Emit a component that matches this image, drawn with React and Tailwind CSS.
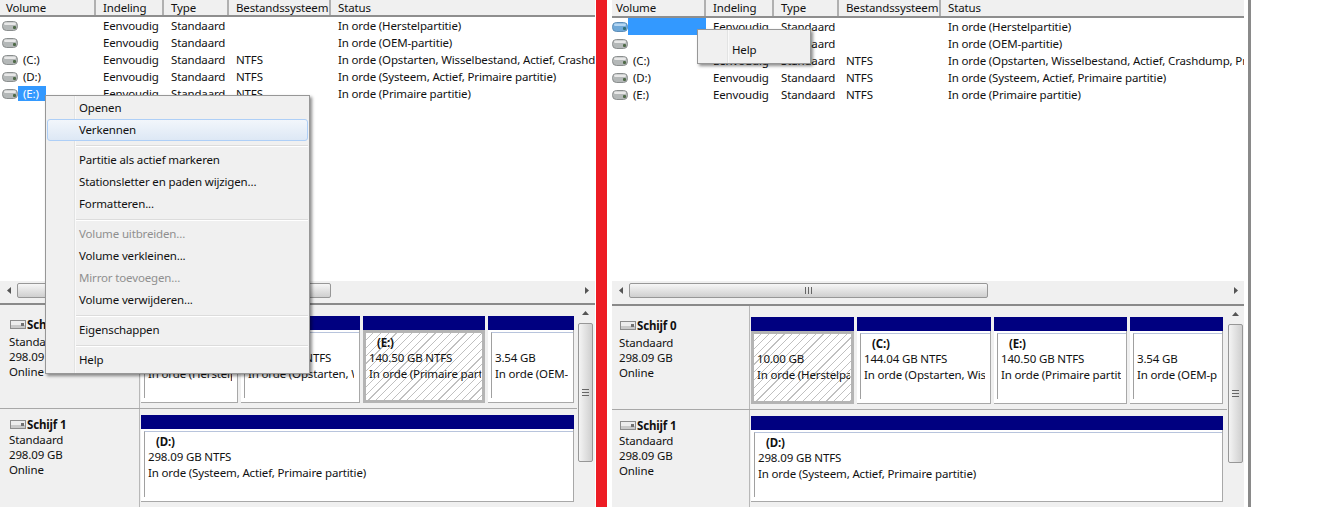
import React from "react";

const rows = [
  ["", "Eenvoudig", "Standaard", "", "In orde (Herstelpartitie)"],
  ["", "Eenvoudig", "Standaard", "", "In orde (OEM-partitie)"],
  ["(C:)", "Eenvoudig", "Standaard", "NTFS", "In orde (Opstarten, Wisselbestand, Actief, Crashdump, Primaire partitie)"],
  ["(D:)", "Eenvoudig", "Standaard", "NTFS", "In orde (Systeem, Actief, Primaire partitie)"],
  ["(E:)", "Eenvoudig", "Standaard", "NTFS", "In orde (Primaire partitie)"],
];

function DriveIcon({ blue }) {
  return (
    <svg width="16" height="10" viewBox="0 0 16 10" className="shrink-0">
      <rect x="0.5" y="0.5" width="15" height="9" rx="4" fill={blue ? "#6fa8d8" : "#b4b8b8"} stroke={blue ? "#5c8db8" : "#8a8e8e"} />
      <rect x="2" y="1.5" width="12" height="2.5" rx="1.2" fill={blue ? "#b5d6f2" : "#e8e8e8"} />
      <rect x="11" y="5" width="3" height="3" rx="1" fill={blue ? "#2f6f78" : "#4f6a48"} />
    </svg>
  );
}

function DiskIcon() {
  return (
    <svg width="16" height="9" viewBox="0 0 16 9" className="shrink-0">
      <rect x="0.5" y="0.5" width="15" height="8" fill="#ececec" stroke="#8c8c8c" />
      <rect x="1" y="5" width="14" height="3" fill="#c8c8c8" />
      <rect x="11" y="3" width="3" height="3" fill="#707070" />
    </svg>
  );
}

function Arrow({ dir }) {
  const pts = { left: "4,0 0,3.5 4,7", right: "0,0 4,3.5 0,7", up: "0,4 3.5,0 7,4" }[dir];
  const size = dir === "up" ? [7, 4] : [4, 7];
  return (
    <svg width={size[0]} height={size[1]} viewBox={`0 0 ${size[0]} ${size[1]}`} className="shrink-0">
      <polygon points={pts} fill="#555555" />
    </svg>
  );
}

function Table({ first, pad, iconPad, head, selection }) {
  const cols = [first, 68, 65, 102];
  const names = ["Volume", "Indeling", "Type", "Bestandssysteem"];
  return (
    <div className="h-[281px] shrink-0 overflow-hidden bg-white">
      <div className={`flex ${head} bg-[#f0f0f0] border-b-2 border-[#8e8e8e] whitespace-nowrap`}>
        {names.map((n, i) => (
          <div key={n} style={{ width: cols[i], paddingLeft: i === 0 ? pad : 7 }} className="shrink-0 border-r-2 border-[#b0b0b0] leading-[15px] overflow-hidden">
            {n}
          </div>
        ))}
        <div className="pl-[7px] leading-[15px]">Status</div>
      </div>
      <div>
        {rows.map((r, idx) => (
          <div key={idx} className="flex h-[17px] items-center whitespace-nowrap">
            <div style={{ width: cols[0], paddingLeft: iconPad }} className="shrink-0 flex items-center h-full">
              <DriveIcon blue={selection === "top" && idx === 0} />
              {selection === "top" && idx === 0 ? (
                <div className="flex-1 h-[17px] bg-[#3399ff]" />
              ) : selection === "e" && idx === 4 ? (
                <span className="px-[5px] w-[28px] h-[15px] leading-[15px] bg-[#3399ff] text-white">{r[0]}</span>
              ) : (
                <span className="ml-[5px]">{r[0]}</span>
              )}
            </div>
            <div className="w-[68px] pl-[7px] shrink-0">{r[1]}</div>
            <div className="w-[65px] pl-[7px] shrink-0">{r[2]}</div>
            <div className="w-[102px] pl-[7px] shrink-0">{r[3]}</div>
            <div className="pl-[7px]">{r[4]}</div>
          </div>
        ))}
      </div>
    </div>
  );
}

function HScroll({ h, thumb, grip }) {
  return (
    <div className={`${h} bg-[#f0f0f0] shrink-0`}>
      <div className="flex items-center h-[16px] mt-[1px]">
        <div className="w-[17px] flex justify-center shrink-0"><Arrow dir="left" /></div>
        <div style={{ width: thumb }} className="h-[15px] rounded-[2px] border border-[#979797] bg-gradient-to-b from-[#f6f6f6] to-[#cfcfcf] flex items-center justify-center shrink-0">
          {grip && <span className="w-[7px] h-[7px] bg-[repeating-linear-gradient(90deg,#666_0px,#666_1px,transparent_1px,transparent_3px)]" />}
        </div>
        <div className="flex-1" />
        <div className="w-[17px] flex justify-center shrink-0"><Arrow dir="right" /></div>
      </div>
    </div>
  );
}

function Lines({ label, size, status, wide }) {
  return (
    <div className={`${wide ? "mr-[1px]" : "mr-[5px]"} overflow-hidden whitespace-nowrap leading-[15.5px]`}>
      <div className="pl-[8px] font-bold h-[15px]">{label}</div>
      <div>{size}</div>
      <div>{status}</div>
    </div>
  );
}

function Partition({ w, label, size, status, selected }) {
  return (
    <div style={{ width: w }} className="shrink-0 flex flex-col h-full">
      <div className="h-[14px] bg-[#000080] shrink-0" />
      {selected ? (
        <div className="flex-1 min-h-0 border-[3px] border-[#b4b4b4] bg-[repeating-linear-gradient(135deg,#ffffff_0px,#ffffff_4.7px,#c0c0c0_4.7px,#c0c0c0_5.5px)] pl-[3px] pt-[2px]">
          <Lines label={label} size={size} status={status} wide />
        </div>
      ) : (
        <div className="flex-1 min-h-0 bg-white border-r border-b border-[#a8a8a8] pl-[3px] pt-[2px] pb-[4px] flex">
          <div className="flex-1 min-w-0 border-l border-t border-l-[#a0a0a0] border-t-[#b8c4dc] pl-[3px] pt-[2px]">
            <Lines label={label} size={size} status={status} />
          </div>
        </div>
      )}
    </div>
  );
}

function DiskLabel({ name, tx, ix, w, second }) {
  return (
    <div style={{ paddingLeft: tx, width: w }} className={`shrink-0 border-r border-[#b8b8b8] ${second ? "pt-[8px]" : "pt-[12px]"} leading-[15px] whitespace-nowrap`}>
      <div style={{ marginLeft: ix }} className="flex items-center font-bold h-[15px]">
        <DiskIcon />
        <span className="ml-[1px]">{name}</span>
      </div>
      <div className={second ? "" : "mt-[2px]"}>Standaard</div>
      <div>298.09 GB</div>
      <div>Online</div>
    </div>
  );
}

function Lower({ labelPad, iconPad, labelW, parts, diskW, barMargin }) {
  return (
    <div className="flex-1 min-h-0 bg-[#f0f0f0] flex overflow-hidden">
      <div className="flex-1 min-w-0 flex flex-col">
        <div className="flex h-[104px] border-b border-[#a8a8a8] shrink-0">
          <DiskLabel name="Schijf 0" tx={labelPad} ix={iconPad} w={labelW} />
          <div className="flex gap-[3px] pl-[1px] pt-[11px] pb-[5px]">
            {parts.map((p, i) => <Partition key={i} {...p} />)}
          </div>
        </div>
        <div className="flex flex-1 min-h-0">
          <DiskLabel name="Schijf 1" tx={labelPad} ix={iconPad} w={labelW} second />
          <div className="pl-[1px] pt-[6px] pb-[5px]">
            <Partition w={diskW} label="(D:)" size="298.09 GB NTFS" status="In orde (Systeem, Actief, Primaire partitie)" />
          </div>
        </div>
      </div>
      <div className={`w-[16px] shrink-0 ${barMargin} flex flex-col items-center pt-[6px]`}>
        <Arrow dir="up" />
        <div className="mt-[8px] w-[15px] h-[139px] rounded-[2px] border border-[#979797] bg-gradient-to-r from-[#f4f4f4] to-[#cfcfcf] flex items-center justify-center">
          <span className="w-[7px] h-[7px] bg-[repeating-linear-gradient(0deg,#666_0px,#666_1px,transparent_1px,transparent_3px)]" />
        </div>
      </div>
    </div>
  );
}

function Item({ children, off }) {
  return (
    <div className={`h-[22px] leading-[20px] pl-[32px] ${off ? "text-[#8f8f8f]" : ""}`}>{children}</div>
  );
}

function Sep() {
  return (
    <div className="h-[8px] flex items-center pl-[29px]">
      <div className="w-full h-[2px] border-t border-[#dcdcdc] border-b-white border-b" />
    </div>
  );
}

function MainMenu() {
  return (
    <div className="absolute left-[45px] top-[95px] w-[265px] h-[279px] bg-[#f0f0f0] border border-[#979797] shadow-[2px_2px_3px_rgba(0,0,0,0.45)] pt-[2px] px-[1px] z-10 whitespace-nowrap">
      <div className="absolute left-[28px] top-0 bottom-0 w-[2px] border-l border-[#e2e3e3] bg-white/60" />
      <div className="relative">
        <Item>Openen</Item>
        <div className="h-[22px] -mt-[1px] mb-[1px] leading-[19px] pl-[31px] rounded-[3px] border border-[#aecff7] bg-gradient-to-b from-[#f2f6fb] to-[#dde8f5]">Verkennen</div>
        <Sep />
        <Item>Partitie als actief markeren</Item>
        <Item>Stationsletter en paden wijzigen...</Item>
        <Item>Formatteren...</Item>
        <Sep />
        <Item off>Volume uitbreiden...</Item>
        <Item>Volume verkleinen...</Item>
        <Item off>Mirror toevoegen...</Item>
        <Item>Volume verwijderen...</Item>
        <Sep />
        <Item>Eigenschappen</Item>
        <Sep />
        <Item>Help</Item>
      </div>
    </div>
  );
}

function HelpMenu() {
  return (
    <div className="absolute left-[85px] top-[29px] w-[114px] h-[35px] bg-[#f0f0f0] border border-[#979797] shadow-[2px_2px_3px_rgba(0,0,0,0.45)] z-10">
      <div className="absolute left-[29px] top-0 bottom-0 w-[2px] border-l border-[#e2e3e3] bg-white/60" />
      <div className="absolute left-[34px] top-[10px] leading-[20px]">Help</div>
    </div>
  );
}

export default function App() {
  return (
    <div className="w-[1321px] h-[507px] flex overflow-hidden bg-white text-[11.5px] tracking-[-0.15px] text-[#111] font-['Noto_Sans',sans-serif]">
      <div className="relative w-[596px] shrink-0 flex flex-col pr-[1px]">
        <Table first={96} pad={6} iconPad={2} head="h-[17px]" selection="e" />
        <HScroll h="h-[22px]" thumb={314} />
        <div className="h-[2px] bg-[#8a8a8a] shrink-0" />
        <Lower
          labelPad={9}
          iconPad={1}
          labelW={140}
          diskW={433}
          barMargin="mr-[2px]"
          parts={[
            { w: 97, label: "", size: "10.00 GB", status: "In orde (Herstelpartitie)" },
            { w: 119, label: "(C:)", size: "144.04 GB NTFS", status: "In orde (Opstarten, Wisselbestand)" },
            { w: 122, label: "(E:)", size: "140.50 GB NTFS", status: "In orde (Primaire partitie)", selected: true },
            { w: 86, label: "", size: "3.54 GB", status: "In orde (OEM-partitie)" },
          ]}
        />
        <MainMenu />
      </div>
      <div className="w-[11px] bg-[#ed1c24] shrink-0" />
      <div className="w-[5px] shrink-0" />
      <div className="relative w-[632px] shrink-0 flex flex-col">
        <Table first={94} pad={4} iconPad={0} head="h-[18px]" selection="top" />
        <HScroll h="h-[23px]" thumb={359} grip />
        <div className="h-[2px] bg-[#8a8a8a] shrink-0" />
        <Lower
          labelPad={7}
          iconPad={1}
          labelW={138}
          diskW={472}
          barMargin="mr-[1px]"
          parts={[
            { w: 103, label: "", size: "10.00 GB", status: "In orde (Herstelpartitie)", selected: true },
            { w: 134, label: "(C:)", size: "144.04 GB NTFS", status: "In orde (Opstarten, Wisselbestand)" },
            { w: 133, label: "(E:)", size: "140.50 GB NTFS", status: "In orde (Primaire partitie)" },
            { w: 93, label: "", size: "3.54 GB", status: "In orde (OEM-partitie)" },
          ]}
        />
        <HelpMenu />
      </div>
      <div className="w-[4px] shrink-0" />
      <div className="w-[3px] bg-[#8a8a8a] shrink-0" />
    </div>
  );
}
